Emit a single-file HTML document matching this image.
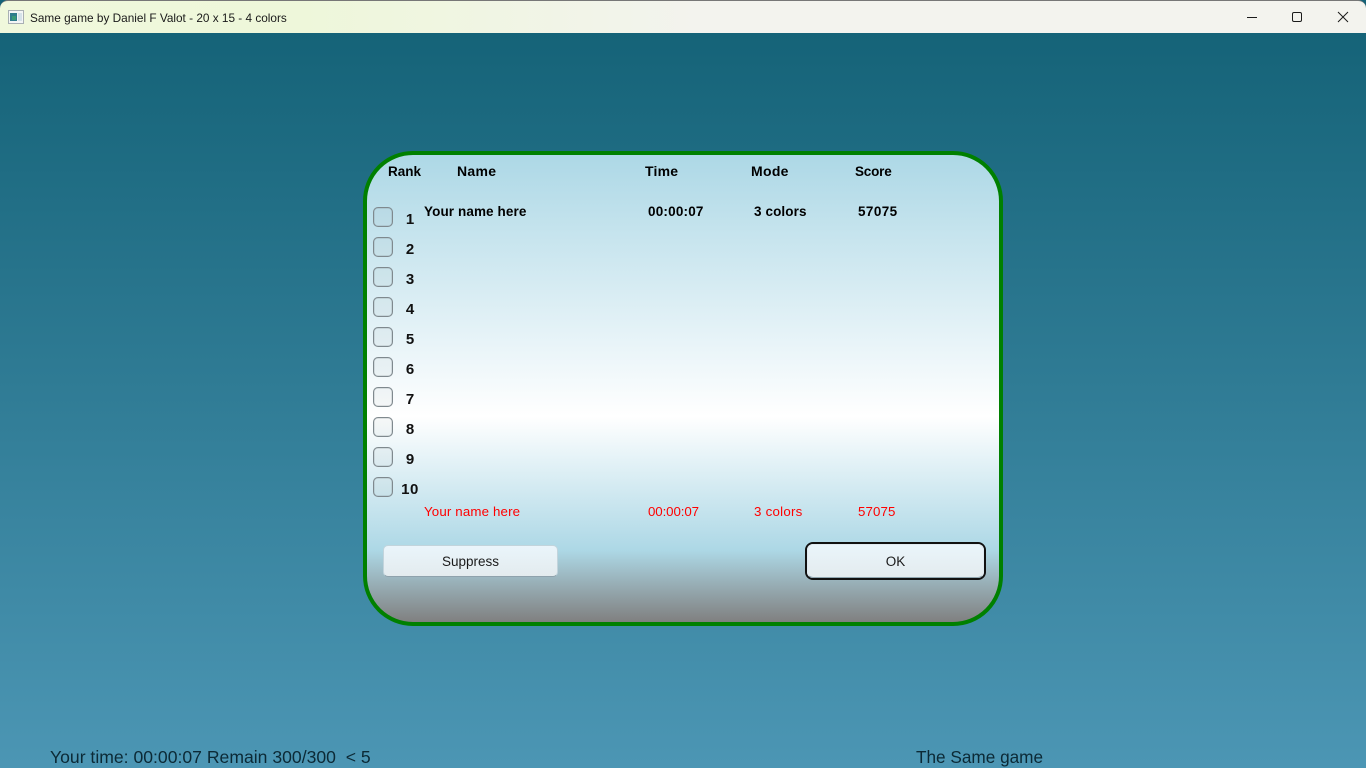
<!DOCTYPE html>
<html>
<head>
<meta charset="utf-8">
<style>
html,body{margin:0;padding:0;width:1366px;height:768px;overflow:hidden;background:#156378;}
body{position:relative;font-family:"Liberation Sans",sans-serif;color:#000;}
.t{position:absolute;white-space:nowrap;line-height:18px;height:18px;}
.h{font-size:14px;font-weight:bold;}
.d{font-size:13.5px;font-weight:bold;}
.r{font-size:13.3px;color:#f00;}
.n{font-size:15px;font-weight:bold;color:#111;line-height:20px;height:20px;text-align:center;}
.c{position:absolute;left:373px;width:18px;height:18px;border:1px solid #7f898e;border-radius:5px;background:rgba(120,130,135,.06);box-shadow:inset 0 0 0 .5px rgba(120,130,135,.4);}
#bg{position:absolute;left:0;top:33px;width:1366px;height:735px;background:linear-gradient(#156378,#4c96b4);}
#bar{position:absolute;left:0;top:0;width:1366px;height:33px;background:linear-gradient(90deg,#f0f8dc 0,#eef7da 300px,#f3f3ee 700px,#f3f3ee 100%);border-top:1px solid #777;box-sizing:border-box;border-top-right-radius:8px;border-top-left-radius:8px;}
#panel{position:absolute;left:363px;top:151px;width:640px;height:475px;box-sizing:border-box;border:4px solid #008000;border-radius:50px;background:linear-gradient(#add8e6 0,#ffffff 56%,#add8e6 84.6%,#808080 100%);}
.b{position:absolute;box-sizing:border-box;background:linear-gradient(#eaf5fb,#e3ebee);font-size:13.5px;color:#1a1a1a;text-align:center;}
</style>
</head>
<body>
<div id="bg"></div>
<div id="bar"></div>
<svg style="position:absolute;left:8px;top:10px" width="16" height="14" viewBox="0 0 16 14"><rect x=".5" y=".5" width="15" height="13" fill="#f4f6f6" stroke="#a9b0b4"/><rect x="2" y="3" width="7" height="8" fill="#2f7d8c"/><rect x="4" y="6" width="4" height="4" fill="#3a9a78"/><rect x="10" y="3" width="4" height="8" fill="#d5e2ea"/></svg>
<div class="t" style="left:30px;top:9px;font-size:11.8px;color:#1a1a1a">Same game by Daniel F Valot - 20 x 15 - 4 colors</div>
<svg style="position:absolute;left:1230px;top:0" width="136" height="33" viewBox="0 0 136 33" fill="none" stroke="#1a1a1a" stroke-width="1">
<path d="M17 17.5h10"/>
<rect x="62.5" y="12.5" width="9" height="9" rx="1.5"/>
<path d="M108 12l10 10M118 12l-10 10"/>
</svg>

<div id="panel"></div>

<div class="t d" style="left:388px;top:163px">Rank</div>
<div class="t h" style="left:457px;top:162px;letter-spacing:.3px">Name</div>
<div class="t h" style="left:645px;top:162px;letter-spacing:.2px">Time</div>
<div class="t h" style="left:751px;top:162px;letter-spacing:.3px">Mode</div>
<div class="t d" style="left:855px;top:163px;letter-spacing:-.2px">Score</div>

<div class="t d" style="left:424px;top:203px;letter-spacing:.1px">Your name here</div>
<div class="t d" style="left:648px;top:203px;letter-spacing:.2px">00:00:07</div>
<div class="t d" style="left:754px;top:203px;letter-spacing:.1px">3 colors</div>
<div class="t d" style="left:858px;top:203px;letter-spacing:.4px">57075</div>

<div class="c" style="top:207px"></div><div class="t n" style="left:400px;width:20px;top:210px">1</div>
<div class="c" style="top:237px"></div><div class="t n" style="left:400px;width:20px;top:240px">2</div>
<div class="c" style="top:267px"></div><div class="t n" style="left:400px;width:20px;top:270px">3</div>
<div class="c" style="top:297px"></div><div class="t n" style="left:400px;width:20px;top:300px">4</div>
<div class="c" style="top:327px"></div><div class="t n" style="left:400px;width:20px;top:330px">5</div>
<div class="c" style="top:357px"></div><div class="t n" style="left:400px;width:20px;top:360px">6</div>
<div class="c" style="top:387px"></div><div class="t n" style="left:400px;width:20px;top:390px">7</div>
<div class="c" style="top:417px"></div><div class="t n" style="left:400px;width:20px;top:420px">8</div>
<div class="c" style="top:447px"></div><div class="t n" style="left:400px;width:20px;top:450px">9</div>
<div class="c" style="top:477px"></div><div class="t n" style="left:400px;width:20px;top:480px;letter-spacing:.5px">10</div>

<div class="t r" style="left:424px;top:503px;letter-spacing:.15px">Your name here</div>
<div class="t r" style="left:648px;top:503px;letter-spacing:-.1px">00:00:07</div>
<div class="t r" style="left:754px;top:503px;letter-spacing:.25px">3 colors</div>
<div class="t r" style="left:858px;top:503px;letter-spacing:.1px">57075</div>

<div class="b" style="left:383px;top:545px;width:175px;height:32px;line-height:32px;border-radius:5px;border:1px solid #c2d4dc;border-bottom-color:#8fa2ac;">Suppress</div>
<div class="b" style="left:805px;top:542px;width:181px;height:38px;line-height:36px;border-radius:8px;border:2px solid #111;"><div style="position:absolute;left:0;top:0;right:0;bottom:0;border:1px solid #dfeaf0;border-bottom:1px solid #8fa6b0;border-radius:6px;box-sizing:border-box;"></div>OK</div>

<div class="t" style="left:50px;top:746px;font-size:17.6px;line-height:22px;height:22px;color:#0c2a36">Your time: 00:00:07 Remain 300/300&nbsp; &lt; 5</div>
<div class="t" style="left:916px;top:746px;font-size:17.2px;line-height:22px;height:22px;color:#0c2a36">The Same game</div>
</body>
</html>
